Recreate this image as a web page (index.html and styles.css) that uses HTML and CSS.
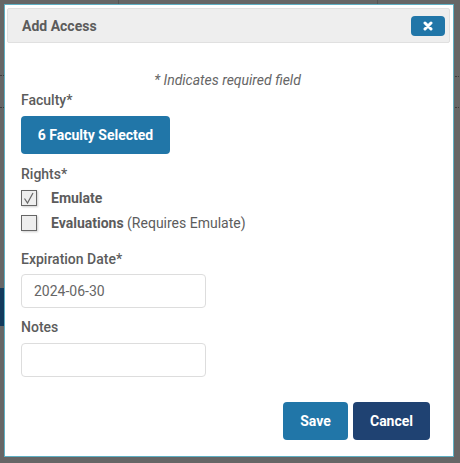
FILE: index.html
```html
<!DOCTYPE html>
<html lang="en">
<head>
    <meta charset="UTF-8">
    <title>Add Access</title>
    <link rel="stylesheet" href="styles.css">
</head>
<body>
    <!-- bits of the page behind the modal -->
    <div class="backdrop-block"></div>
    <div class="backdrop-line line-one"></div>
    <div class="backdrop-line line-two"></div>
    <div class="backdrop-dots dots-one"></div>
    <div class="backdrop-dots dots-two"></div>
    <div class="backdrop-dots dots-three"></div>
    <div class="backdrop-dots dots-four"></div>

    <div class="dialog">
        <div class="dialog-header">
            <span class="dialog-title">Add Access</span>
            <button class="close-button" aria-label="Close">
                <svg width="10" height="10" viewBox="0 0 10 10">
                    <path d="M2 2 L8 8 M8 2 L2 8" stroke="#fff" stroke-width="3" stroke-linecap="round" fill="none"/>
                </svg>
            </button>
        </div>

        <div class="dialog-body">
            <p class="required-note">* Indicates required field</p>

            <label class="field-label faculty-label">Faculty*</label>
            <button class="faculty-button">6 Faculty Selected</button>

            <label class="field-label rights-label">Rights*</label>
            <div class="check-row">
                <span class="check-box">
                    <svg width="14" height="14" viewBox="0 0 14 14">
                        <path d="M2.5 7.5 L5.5 12 L11 2" stroke="#666" stroke-width="1.2" fill="none"/>
                    </svg>
                </span>
                <span class="check-text"><b>Emulate</b></span>
            </div>
            <div class="check-row">
                <span class="check-box"></span>
                <span class="check-text"><b>Evaluations</b> (Requires Emulate)</span>
            </div>

            <label class="field-label date-label">Expiration Date*</label>
            <input class="text-input date-input" type="text" value="2024-06-30">

            <label class="field-label notes-label">Notes</label>
            <input class="text-input" type="text">

            <div class="dialog-actions">
                <button class="action-button save-button">Save</button>
                <button class="action-button cancel-button">Cancel</button>
            </div>
        </div>
    </div>
</body>
</html>
```

FILE: styles.css
```css
* {
    margin: 0;
    padding: 0;
    box-sizing: border-box;
}

html, body {
    width: 460px;
    height: 463px;
    overflow: hidden;
}

body {
    position: relative;
    background-color: #666;
    color: #5c5c5c;
    font-family: Roboto, sans-serif;
    font-size: 14px;
    padding: 4px 6px 0 4px;
}

/* Backdrop */
.backdrop-block {
    position: absolute;
    left: 0;
    top: 288px;
    width: 5px;
    height: 38px;
    background-color: #123a5c;
}

.backdrop-line {
    position: absolute;
    top: 0;
    width: 1px;
    height: 4px;
    background-color: #555;
}

.line-one {
    left: 118px;
}

.line-two {
    left: 377px;
}

.backdrop-dots {
    position: absolute;
    width: 4px;
    border-top: 1px dotted #3c3c3c;
}

.dots-one {
    left: 0;
    top: 75px;
}

.dots-two {
    left: 0;
    top: 107px;
}

.dots-three {
    left: 455px;
    top: 76px;
}

.dots-four {
    left: 455px;
    top: 107px;
}

/* Dialog */
.dialog {
    position: relative;
    height: 453px;
    background-color: #fff;
    border: 1px solid #5fb0c4;
    padding: 3px 3px 3px 2px;
}

.dialog-header {
    display: flex;
    align-items: center;
    justify-content: space-between;
    height: 35px;
    padding: 0 4px 0 14px;
    background-color: #eee;
    border: 1px solid #e0e0e0;
    border-radius: 2px;
}

.dialog-title {
    font-size: 14px;
    font-weight: 700;
}

.close-button {
    display: flex;
    align-items: center;
    justify-content: center;
    width: 34px;
    height: 20px;
    background-color: #2176a8;
    border: none;
    border-radius: 4px;
}

.dialog-body {
    padding: 0 14px;
}

.required-note {
    margin-top: 29px;
    padding-right: 2px;
    text-align: center;
    font-style: italic;
    line-height: 17px;
    color: #666;
}

.field-label {
    display: block;
    font-weight: 500;
    line-height: 17px;
}

.faculty-label {
    margin-top: 3px;
}

.faculty-button {
    display: block;
    width: 149px;
    height: 38px;
    margin-top: 7px;
    background-color: #2176a8;
    color: #fff;
    border: none;
    border-radius: 4px;
    font-family: inherit;
    font-size: 14px;
    font-weight: 700;
}

.rights-label {
    margin-top: 12px;
}

.check-row {
    display: flex;
    align-items: center;
    height: 25px;
}

.rights-label + .check-row {
    margin-top: 2px;
}

.check-box {
    display: flex;
    align-items: center;
    justify-content: center;
    width: 16px;
    height: 16px;
    margin-right: 14px;
    background-color: #eee;
    border: 1px solid #666;
    box-shadow: 1px 1px 2px rgba(0, 0, 0, 0.2);
}

.check-text b {
    font-weight: 700;
}

.date-label {
    margin-top: 16px;
}

.notes-label {
    margin-top: 11px;
}

.text-input {
    display: block;
    width: 185px;
    height: 34px;
    margin-top: 7px;
    padding: 0 12px;
    background-color: #fff;
    border: 1px solid #ddd;
    border-radius: 4px;
    color: #666;
    font-family: inherit;
    font-size: 14px;
}

.date-input {
    margin-top: 6px;
}

.dialog-actions {
    display: flex;
    justify-content: flex-end;
    gap: 5px;
    margin-top: 25px;
    padding-right: 6px;
}

.action-button {
    height: 38px;
    color: #fff;
    border: none;
    border-radius: 4px;
    font-family: inherit;
    font-size: 14px;
    font-weight: 700;
}

.save-button {
    width: 65px;
    background-color: #2176a8;
}

.cancel-button {
    width: 77px;
    background-color: #1f4272;
}
```
